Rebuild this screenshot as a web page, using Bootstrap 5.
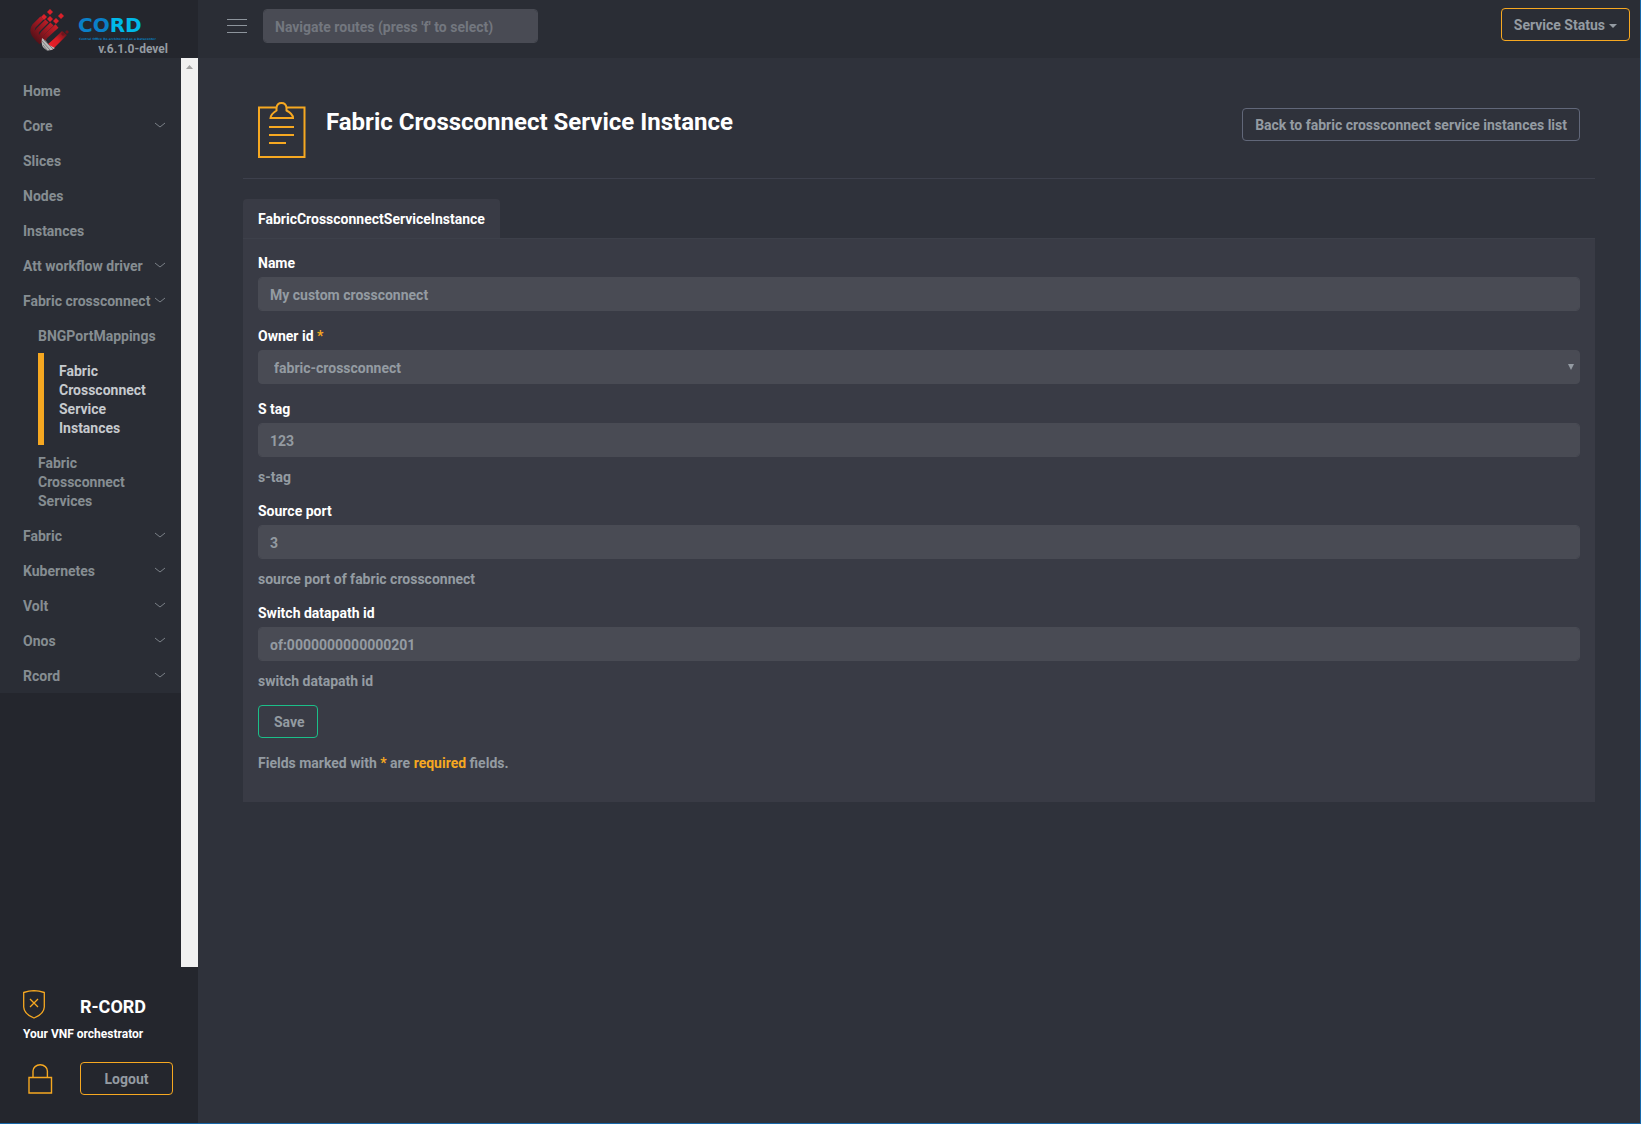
<!DOCTYPE html>
<html lang="en">
<head>
<meta charset="utf-8">
<meta name="viewport" content="width=device-width, initial-scale=1">
<title>Fabric Crossconnect Service Instance</title>
<link href="https://cdn.jsdelivr.net/npm/bootstrap@5.3.0/dist/css/bootstrap.min.css" rel="stylesheet">
<style>
:root{--accent:#f6a821;--txt:#949ba2;--dark:#24262d;--side:#2a2d35;--main:#2f323b;--pane:#393b45;--field:#494b54}
body{font-family:Roboto,"Liberation Sans",sans-serif;font-size:14px;line-height:19px;font-weight:700;color:var(--txt);background:var(--main)}
.app-frame{min-height:100vh;border-right:1px solid #1767a8;border-bottom:1px solid #1767a8}
.side-col{width:198px;flex:none;background:var(--dark)}
.brand-box{height:58px;padding:8px 30px 0 30px}
.brand-art{display:block;width:138px;height:44px}
.version{font-size:12px;line-height:16px;margin-top:-11px}
.side-scroll{flex:1 1 auto}
.side-nav{background:var(--side);padding-top:15px}
.side-nav a{display:flex;justify-content:space-between;align-items:center;color:#868d92;text-decoration:none;padding:9px 15px 7px 23px}
.side-nav ul a{padding-left:38px;padding-right:30px}
.side-nav ul a.active{margin-left:38px;padding-left:15px;border-left:6px solid var(--accent);color:#c6cace}
.side-nav svg{flex:none;width:12px;height:8px;margin-bottom:3px}
.track{width:17px;flex:none;background:#f1f1f1;padding-top:7px}
.side-foot{padding:22px 24px 28px 23px}
.foot-grid{display:grid;grid-template-columns:57px 1fr;align-items:start}
.foot-grid svg{margin-top:1px}
.brand-name{font-size:18px;line-height:24px;padding-top:6px}
.foot-note{font-size:12px;line-height:16px;margin-top:7px}
.foot-actions{margin-top:20px;padding-right:1px}
.foot-actions svg{margin:2px 0 0 4px}
.btn{--bs-btn-font-size:14px;--bs-btn-font-weight:700;--bs-btn-line-height:19px;--bs-btn-padding-y:6px;--bs-btn-padding-x:12px;--bs-btn-border-radius:4px;--bs-btn-color:var(--txt);--bs-btn-hover-color:#fff;padding-top:7px;padding-bottom:5px}
.btn-amber{--bs-btn-border-color:var(--accent);--bs-btn-hover-border-color:var(--accent)}
.btn-slate{--bs-btn-border-color:#616779;--bs-btn-hover-border-color:#949ba2}
.btn-green{--bs-btn-border-color:#1bbf89;--bs-btn-hover-border-color:#1bbf89;padding-left:15px}
.dropdown-toggle::after{border-width:4px 4px 0;margin-left:4px;vertical-align:2px}
.top-bar{height:58px;background:var(--side);padding:8px 10px 0 29px}
.form-control,.form-select{height:34px;padding:7px 12px 5px 11px;font-size:14px;line-height:20px;font-weight:700;color:var(--txt);background-color:var(--field);border:1px solid var(--field);border-radius:4px}
.form-control:focus,.form-select:focus{color:var(--txt);background-color:var(--field);border-color:var(--accent);box-shadow:none}
.form-control::placeholder{color:#73777f}
.form-select{padding-left:15px;background-image:url("data:image/svg+xml,%3Csvg xmlns='http://www.w3.org/2000/svg' viewBox='0 0 6 6'%3E%3Cpath d='M0 0h6L3 6z' fill='%23949ba2'/%3E%3C/svg%3E");background-size:6px 6px;background-position:right 5px center}
.menu-btn{margin:10px 15px 0 0}
.route-box{width:275px;margin-top:1px}
.content-area{padding:43px 45px 60px}
.page-head{height:78px;padding:0 15px 0 14px;border-bottom:1px solid #3d404c}
.page-head h1{font-size:24px;line-height:28px;font-weight:700;color:#fff;margin:7px 0 0 19px}
.back-btn{margin-top:7px}
.nav-tabs{border:0;margin-top:20px}
.nav-tabs .nav-link{padding:11px 15px 9px;margin:0;border:0;border-radius:4px 4px 0 0;color:#fff}
.nav-tabs .nav-link.active{background:var(--pane);color:#fff}
.pane-body{background:var(--pane);border-top:1px solid #3d404a;padding:15px 15px 29px}
.form-label{display:block;margin-bottom:4px;color:#fff}
.field-group{margin-bottom:16px}
.help-line{margin:11px 0 -1px}
.save-row{margin-top:15px}
.accent{color:var(--accent)}
</style>
</head>
<body>
<div class="app-frame d-flex">
  <aside class="side-col d-flex flex-column">
    <div class="brand-box">
      <svg class="brand-art" viewBox="0 0 138 44" role="img" aria-label="CORD">
        <defs>
          <linearGradient id="red" gradientUnits="userSpaceOnUse" x1="2" y1="32" x2="24" y2="10"><stop offset="0" stop-color="#4a1016"/><stop offset=".45" stop-color="#8f1720"/><stop offset="1" stop-color="#dc202a"/></linearGradient>
          <linearGradient id="redUp" gradientUnits="userSpaceOnUse" x1="18" y1="40" x2="37" y2="24"><stop offset="0" stop-color="#f0222b"/><stop offset=".5" stop-color="#d81c25"/><stop offset="1" stop-color="#5a131a"/></linearGradient>
          <linearGradient id="cyan" x1="0" y1="0" x2="1" y2="0"><stop offset=".48" stop-color="#0a80c8"/><stop offset=".48" stop-color="#00b9e8"/></linearGradient>
        </defs>
        <g fill="none" stroke="url(#red)" stroke-width="4.400">
          <path d="M12 10 4 18Q1 22 4 27L9 33"/>
          <path d="M17 13 8 22Q5 25 8 30L11 35"/>
          <path d="M22 16 13 25Q9 29 12 34"/>
          <path d="M27 18 16 28Q13 31 14 34"/>
        </g>
        <path d="M18 36Q22 33 32 23L37 27 22 42 17 42Z" fill="url(#redUp)"/>
        <path d="M12 30Q17 33 19 37L25 40Q21 43 17 42.500Q10 39 12 30Z" fill="#b9b9b9"/>
        <path d="M12 33 20 42M13 37 17 42M14 32 23 41" stroke="#666" stroke-width=".7"/>
        <g fill="#d8202a"><path d="m20 1 3 3-3 3-3-3z"/><path d="m20 8 3 3-3 3-3-3z"/><path d="m26 10 3 3-3 3-3-3z"/><path d="m31 5 3 3-3 3-3-3z"/><path d="m14 6 3 3-3 3-3-3z"/></g>
        <path d="m37 22 2 2-2 2-2-2zM33 24l2 2-2 2-2-2z" fill="#6d151c"/>
        <text x="48" y="24" font-family="DejaVu Sans" font-weight="700" font-size="20" fill="url(#cyan)">CORD</text>
        <text x="49" y="32" font-family="DejaVu Sans" font-weight="700" font-size="3" fill="#087ab9">Central Office Re-architected as a Datacenter</text>
      </svg>
      <div class="version text-end">v.6.1.0-devel</div>
    </div>
    <div class="side-scroll d-flex">
      <div class="flex-grow-1">
        <nav class="side-nav" aria-label="Main">
          <a href="#">Home</a>
          <a href="#">Core <svg viewBox="0 0 12 8"><path d="M1 2l5 4 5-4" fill="none" stroke="#7b8188"/></svg></a>
          <a href="#">Slices</a>
          <a href="#">Nodes</a>
          <a href="#">Instances</a>
          <a href="#">Att workflow driver <svg viewBox="0 0 12 8"><path d="M1 2l5 4 5-4" fill="none" stroke="#7b8188"/></svg></a>
          <a href="#">Fabric crossconnect <svg viewBox="0 0 12 8"><path d="M1 2l5 4 5-4" fill="none" stroke="#7b8188"/></svg></a>
          <ul class="list-unstyled mb-0">
            <li><a href="#" class="pe-0">BNGPortMappings</a></li>
            <li><a href="#" class="active" aria-current="page">Fabric Crossconnect Service Instances</a></li>
            <li><a href="#">Fabric Crossconnect Services</a></li>
          </ul>
          <a href="#">Fabric <svg viewBox="0 0 12 8"><path d="M1 2l5 4 5-4" fill="none" stroke="#7b8188"/></svg></a>
          <a href="#">Kubernetes <svg viewBox="0 0 12 8"><path d="M1 2l5 4 5-4" fill="none" stroke="#7b8188"/></svg></a>
          <a href="#">Volt <svg viewBox="0 0 12 8"><path d="M1 2l5 4 5-4" fill="none" stroke="#7b8188"/></svg></a>
          <a href="#">Onos <svg viewBox="0 0 12 8"><path d="M1 2l5 4 5-4" fill="none" stroke="#7b8188"/></svg></a>
          <a href="#">Rcord <svg viewBox="0 0 12 8"><path d="M1 2l5 4 5-4" fill="none" stroke="#7b8188"/></svg></a>
        </nav>
      </div>
      <div class="track"><svg class="d-block mx-auto" width="7" height="4" viewBox="0 0 7 4"><path d="M0 4 3.500 0 7 4z" fill="#a3a3a3"/></svg></div>
    </div>
    <div class="side-foot">
      <div class="foot-grid">
        <svg width="23" height="29" viewBox="0 0 23 29" fill="none" stroke="#f6a821" stroke-width="1.300"><path d="M11 .7Q6 1 .7 2.500V17Q1 24 11 28Q21 24 21.300 17V2.500Q16 1 11 .7zM7 9l8 8M15 9l-8 8"/></svg>
        <div class="brand-name text-white">R-CORD</div>
      </div>
      <div class="foot-note text-white">Your VNF orchestrator</div>
      <div class="foot-grid foot-actions">
        <svg width="26" height="31" viewBox="0 0 26 31" fill="none" stroke="#f6a821" stroke-width="1.400"><path d="M2 13.500H24.500V29H2zM6 13.500V7a7.200 6.200 0 0 1 14.400 0v6.500"/></svg>
        <button type="button" class="btn btn-amber">Logout</button>
      </div>
    </div>
  </aside>
  <div class="flex-grow-1">
    <header class="top-bar d-flex align-items-start">
      <button type="button" class="btn p-0 border-0 menu-btn" aria-label="Toggle menu"><svg class="d-block" width="21" height="16" viewBox="0 0 21 16" stroke="#8d949c" fill="none"><path d="M0 1.500h20M0 7.500h20M0 14.500h20"/></svg></button>
      <input class="form-control route-box" type="text" placeholder="Navigate routes (press 'f' to select)" aria-label="Navigate routes">
      <button type="button" class="btn btn-amber dropdown-toggle ms-auto" data-bs-toggle="dropdown">Service Status</button>
    </header>
    <main class="content-area">
      <div class="page-head d-flex align-items-start">
        <svg width="50" height="58" viewBox="0 0 50 58" fill="none" stroke="#f6a821" stroke-width="2"><path d="M19 6.500H2V56H47.500V6.500H29.500"/><path d="M13.500 17H36Q36 13 29.500 9.500V7Q29 2 24.500 2T19.500 7V9.500Q14 13 13.500 17z"/><path d="M12 26H37M12 34H37M12 42H29"/></svg>
        <h1>Fabric Crossconnect Service Instance</h1>
        <button type="button" class="btn btn-slate ms-auto back-btn">Back to fabric crossconnect service instances list</button>
      </div>
      <ul class="nav nav-tabs"><li class="nav-item"><a class="nav-link active" href="#">FabricCrossconnectServiceInstance</a></li></ul>
      <form class="pane-body">
        <div class="field-group"><label class="form-label" for="name">Name</label><input class="form-control" id="name" type="text" value="My custom crossconnect"></div>
        <div class="field-group"><label class="form-label" for="owner">Owner id <span class="accent">*</span></label><select class="form-select" id="owner"><option>fabric-crossconnect</option></select></div>
        <div class="field-group"><label class="form-label" for="stag">S tag</label><input class="form-control" id="stag" type="text" value="123"><p class="help-line">s-tag</p></div>
        <div class="field-group"><label class="form-label" for="port">Source port</label><input class="form-control" id="port" type="text" value="3"><p class="help-line">source port of fabric crossconnect</p></div>
        <div class="field-group mb-0"><label class="form-label" for="dpid">Switch datapath id</label><input class="form-control" id="dpid" type="text" value="of:0000000000000201"><p class="help-line">switch datapath id</p></div>
        <div class="field-group save-row"><button type="submit" class="btn btn-green">Save</button></div>
        <p class="mb-0">Fields marked with <span class="accent">*</span> are <span class="accent">required</span> fields.</p>
      </form>
    </main>
  </div>
</div>
<script src="https://cdn.jsdelivr.net/npm/bootstrap@5.3.0/dist/js/bootstrap.bundle.min.js"></script>
</body>
</html>
